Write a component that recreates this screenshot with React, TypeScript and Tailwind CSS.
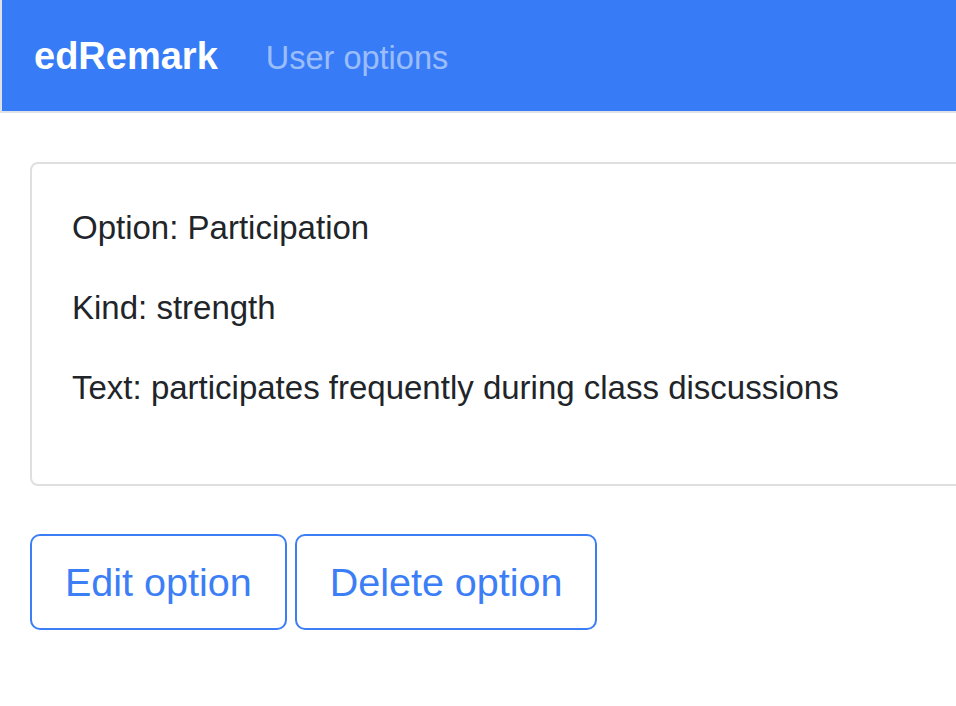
import React from 'react';

interface OptionField {
  label: string;
  value: string;
}

const fields: OptionField[] = [
  { label: 'Option', value: 'Participation' },
  { label: 'Kind', value: 'strength' },
  { label: 'Text', value: 'participates frequently during class discussions' },
];

const App: React.FC = () => {
  return (
    <div className="min-h-[706px] w-[956px] overflow-hidden bg-white font-['Liberation_Sans',Arial,sans-serif] text-[#212529]">
      <nav className="flex h-[113px] items-center border-b-2 border-l-2 border-[#dee2e6] bg-[#377cf6] px-8">
        <a href="#" className="mr-8 text-[38px] font-bold leading-[60px] text-white">
          edRemark
        </a>
        <a href="#" className="px-4 pt-1 text-[32.5px] leading-[48px] text-white/50">
          User options
        </a>
      </nav>

      <main className="px-[30px] pt-[49px]">
        <div className="w-[1100px] rounded-[8px] border-2 border-[#dfdfdf] px-10 pt-10 pb-10">
          {fields.map((f) => (
            <p key={f.label} className="mb-8 text-[33px] leading-[48px]">
              {f.label}: {f.value}
            </p>
          ))}
        </div>

        <div className="mt-[48px] flex gap-2">
          <button className="rounded-[10px] border-2 border-[#3b7ef6] px-[33px] py-4 text-[39.5px] leading-[60px] text-[#3b7ef6]">
            Edit option
          </button>
          <button className="rounded-[10px] border-2 border-[#3b7ef6] px-[33px] py-4 text-[39.5px] leading-[60px] text-[#3b7ef6]">
            Delete option
          </button>
        </div>
      </main>
    </div>
  );
};

export default App;
